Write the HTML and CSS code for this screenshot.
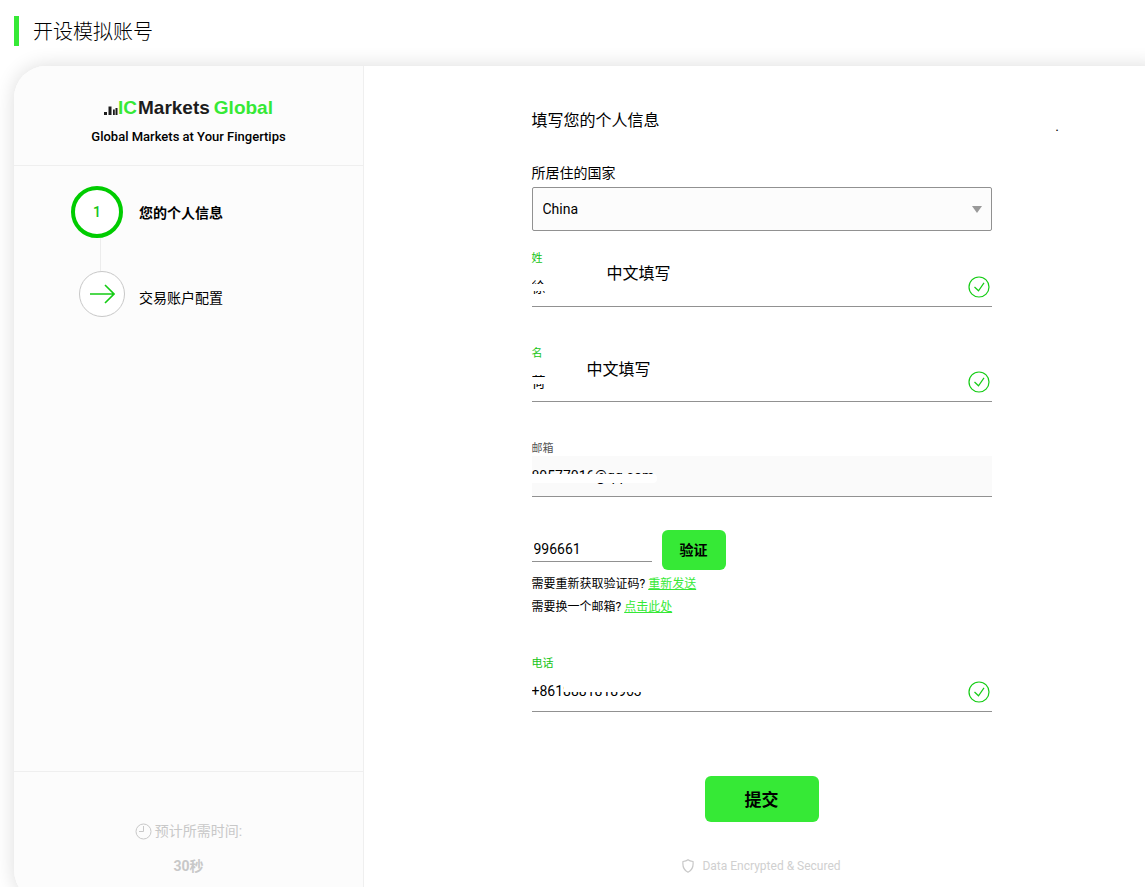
FILE: index.html
```html
<!DOCTYPE html>
<html lang="zh-CN">
<head>
<meta charset="utf-8">
<meta name="viewport" content="width=device-width, initial-scale=1">
<title>开设模拟账号</title>
<link rel="stylesheet" href="styles.css">
</head>
<body>
<div class="page">
  <h1 class="page-title">开设模拟账号</h1>
  <div class="card">
    <aside class="sidebar">
      <div class="brand">
        <div class="logo">
          <svg class="logo-bars" width="14" height="14" viewBox="0 0 14 14" aria-hidden="true"><path fill="#1c1c1c" d="M0 10h3v3H0zM4.500 4.500h3V13h-3zM9 7.500h1.800V13H9zM11.500 6h2v7h-2z"/></svg>
          <span class="logo-green">IC</span><span class="logo-dark">Markets</span><span class="logo-green logo-last">Global</span>
        </div>
        <p class="tagline">Global Markets at Your Fingertips</p>
      </div>
      <ol class="steps">
        <li class="step step-active"><span class="step-mark">1</span><span class="step-name">您的个人信息</span></li>
        <li class="step-line"></li>
        <li class="step step-next">
          <span class="step-mark"><svg width="26" height="20" viewBox="0 0 26 20" fill="none" stroke="#14cc14" stroke-width="1.600" aria-hidden="true"><path d="M1 10h24M16 1l9 9-9 9"/></svg></span>
          <span class="step-name">交易账户配置</span>
        </li>
      </ol>
      <div class="estimate">
        <p class="estimate-label"><svg width="17" height="17" viewBox="0 0 17 17" fill="none" stroke="#c8c8c8" aria-hidden="true"><circle cx="8.500" cy="8.500" r="7.500"/><path d="M8.500 3v5.500H4"/></svg>预计所需时间:</p>
        <p class="estimate-time">30秒</p>
      </div>
    </aside>
    <main class="content">
      <span class="speck">.</span>
      <form class="form">
        <h2 class="form-title">填写您的个人信息</h2>
        <label class="country-label" for="country">所居住的国家</label>
        <div class="select-wrap">
          <select id="country" class="country"><option>China</option></select>
        </div>
        <div class="field">
          <label class="field-label" for="last">姓</label>
          <input class="field-input" id="last" value="徐">
          <span class="mask mask-last"></span>
          <span class="note note-last">中文填写</span>
          <svg class="tick" width="22" height="22" viewBox="0 0 22 22" fill="none" stroke="#14cc14" stroke-width="1.200" aria-hidden="true"><circle cx="11" cy="11" r="10"/><path d="M6.500 11l4 3.800 5.500-8"/></svg>
        </div>
        <div class="field">
          <label class="field-label" for="first">名</label>
          <input class="field-input" id="first" value="荷">
          <span class="mask mask-first"></span>
          <span class="note note-first">中文填写</span>
          <svg class="tick" width="22" height="22" viewBox="0 0 22 22" fill="none" stroke="#14cc14" stroke-width="1.200" aria-hidden="true"><circle cx="11" cy="11" r="10"/><path d="M6.500 11l4 3.800 5.500-8"/></svg>
        </div>
        <div class="field">
          <label class="field-label label-grey" for="email">邮箱</label>
          <input class="field-input input-grey" id="email" value="80577016@qq.com" readonly>
          <span class="mask mask-email"></span>
        </div>
        <div class="verify">
          <input class="code" aria-label="验证码" value="996661">
          <button class="btn btn-verify" type="button">验证</button>
        </div>
        <p class="hint">需要重新获取验证码? <a class="link" href="#">重新发送</a></p>
        <p class="hint">需要换一个邮箱? <a class="link" href="#">点击此处</a></p>
        <div class="field field-phone">
          <label class="field-label" for="phone">电话</label>
          <input class="field-input" id="phone" value="+8618881818963">
          <span class="mask mask-phone"></span>
          <svg class="tick" width="22" height="22" viewBox="0 0 22 22" fill="none" stroke="#14cc14" stroke-width="1.200" aria-hidden="true"><circle cx="11" cy="11" r="10"/><path d="M6.500 11l4 3.800 5.500-8"/></svg>
        </div>
        <button class="btn btn-submit" type="submit">提交</button>
        <p class="secure"><svg width="12" height="14" viewBox="0 0 12 14" fill="none" stroke="#c8c8c8" stroke-width="1.200" aria-hidden="true"><path d="M6 .8C4.500 2 3 2.300 1 2.500c-.6 5 .5 8.700 5 10.700 4.500-2 5.600-5.700 5-10.700C9 2.300 7.500 2 6 .8z"/></svg>Data Encrypted &amp; Secured</p>
      </form>
    </main>
  </div>
</div>
</body>
</html>
```
FILE: styles.css
```css
* { box-sizing: border-box; }
body {
  margin: 0;
  background: #fff;
  color: #000;
  font-family: Roboto, "Noto Sans CJK SC", sans-serif;
  font-size: 14px;
}
h1, h2, p, ol { margin: 0; padding: 0; font-weight: 400; }
ol { list-style: none; }
input, select, button { font: inherit; color: inherit; margin: 0; }
.page { height: 100vh; overflow: hidden; padding: 16px 0 0 14px; }
.page-title {
  border-left: 5px solid #36e936;
  padding-left: 14px;
  font-family: "Noto Sans CJK SC", sans-serif;
  font-size: 20px;
  font-weight: 300;
  line-height: 30px;
}
.card {
  display: flex;
  margin: 20px -14px 0 0;
  min-height: 836px;
  border-radius: 32px 0 0 32px;
  background: #fff;
  box-shadow: 0 0 20px rgba(0, 0, 0, .14);
}
.sidebar {
  flex: 0 0 350px;
  display: flex;
  flex-direction: column;
  background: #fcfcfc;
  border-right: 1px solid #efefef;
  border-radius: 32px 0 0 32px;
}
.brand {
  height: 100px;
  padding-top: 30px;
  border-bottom: 1px solid #efefef;
  text-align: center;
}
.logo {
  display: flex;
  justify-content: center;
  align-items: center;
  font: bold 19px/24px "Liberation Sans", sans-serif;
}
.logo-bars { margin-top: 2px; }
.logo-green { color: #36e936; }
.logo-dark { margin-left: 1px; color: #1c1c1c; }
.logo-last { margin-left: 4px; }
.tagline { margin-top: 7px; font-size: 13px; font-weight: 500; line-height: 20px; }
.steps { flex: 1; padding: 20px 0 0 57px; }
.step { display: flex; align-items: center; }
.step-mark {
  display: flex;
  align-items: center;
  justify-content: center;
  border-radius: 50%;
  background: #fff;
}
.step-active { gap: 16px; font-weight: 700; }
.step-active .step-mark {
  width: 52px;
  height: 52px;
  border: 4px solid #00cc00;
  color: #14c414;
  font-weight: 500;
}
.step-line { width: 1px; height: 33px; margin-left: 29px; background: #ececec; }
.step-next { gap: 14px; padding-left: 8px; }
.step-next .step-mark { width: 46px; height: 46px; border: 1px solid #c8c8c8; }
.step-next .step-name { padding-top: 6px; }
.estimate {
  height: 131px;
  padding-top: 49px;
  border-top: 1px solid #efefef;
  color: #c8c8c8;
  text-align: center;
}
.estimate-label { display: flex; justify-content: center; align-items: center; gap: 3px; line-height: 20px; }
.estimate-time { margin-top: 15px; font-weight: 700; line-height: 20px; }
.content { position: relative; flex: 1; padding: 43px 20px 0; }
.speck { position: absolute; top: 50px; right: 100px; line-height: 20px; }
.form { width: 100%; max-width: 460px; margin: 0 auto; }
.form-title { font-size: 16px; line-height: 24px; }
.country-label { display: block; margin-top: 30px; line-height: 20px; }
.select-wrap { position: relative; margin-top: 4px; }
.select-wrap::after {
  content: "";
  position: absolute;
  top: 19px;
  right: 10px;
  border: 5px solid transparent;
  border-top: 7px solid #999;
  border-bottom: 0;
  pointer-events: none;
}
.country {
  display: block;
  width: 100%;
  height: 44px;
  padding: 0 10px;
  appearance: none;
  border: 1px solid #919191;
  border-radius: 2px;
  background: #fcfcfc;
}
.field { position: relative; height: 95px; padding-top: 20px; }
.field-label { display: block; color: #14c414; font-size: 11px; line-height: 15px; }
.field-label { height: 15px; line-height: 16px; }
.label-grey { color: #555; }
.field-input {
  display: block;
  width: 100%;
  height: 41px;
  padding: 0;
  border: 0;
  border-bottom: 1px solid #919191;
  outline: 0;
  background: transparent;
}
.input-grey { background: #fafafa; }
.tick { position: absolute; top: 45px; right: 2px; }
.note { position: absolute; font-size: 16px; line-height: 24px; }
.note-last { top: 31px; left: 75px; }
.note-first { top: 32px; left: 55px; }
.mask { position: absolute; left: 0; background: #fff; }
.mask-last { top: 53px; width: 16px; height: 7px; }
.mask-first { top: 51px; width: 16px; height: 7px; }
.mask-email { top: 53px; width: 125px; height: 9px; border-radius: 0 4px 4px 0; }
.mask-phone { top: 48px; left: 32px; width: 80px; height: 8px; }
.verify { display: flex; align-items: flex-start; gap: 10px; margin-top: 14px; }
.code {
  width: 120px;
  height: 32px;
  padding: 6px 2px 0;
  border: 0;
  border-bottom: 1px solid #919191;
  outline: 0;
}
.btn { display: block; border: 0; border-radius: 6px; background: #36e936; font-weight: 700; }
.btn-verify { width: 64px; height: 40px; padding: 0 0 2px; }
.hint { font-size: 12px; line-height: 23px; }
.verify + .hint { margin-top: 3px; }
.link { color: #36e936; }
.field-phone { margin-top: 17px; }
.btn-submit { width: 114px; height: 46px; margin: 45px auto 0; padding: 0 0 2px; font-size: 17px; }
.secure {
  display: flex;
  justify-content: center;
  align-items: center;
  gap: 8px;
  margin-top: 34px;
  color: #d0d0d0;
  font-size: 12px;
  line-height: 20px;
}
```
